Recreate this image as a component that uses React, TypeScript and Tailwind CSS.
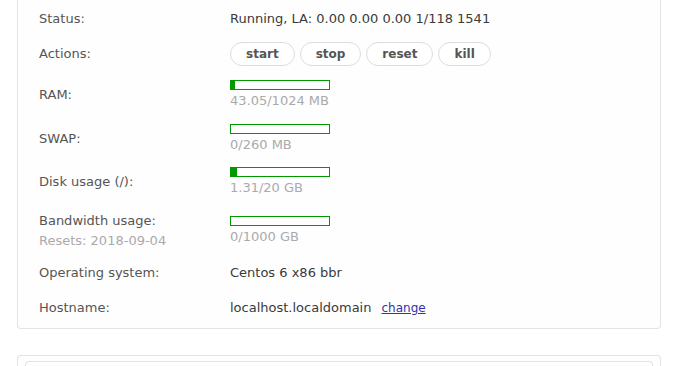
import React from "react";

const font = { fontFamily: '"DejaVu Sans", Verdana, sans-serif' };

function Bar({ used, total, unit }: { used: number; total: number; unit: string }) {
  const pct = Math.min(100, (used / total) * 100);
  return (
    <div className="flex flex-col">
      <div className="h-[10px] w-[100px] border border-[#009900] bg-white">
        <div className="h-full bg-[#009900]" style={{ width: `${pct}%`, minWidth: used > 0 ? 4 : 0 }} />
      </div>
      <div className="mt-[2px] text-[13px] leading-[18px] text-[#aaaaaa]">
        {used}/{total} {unit}
      </div>
    </div>
  );
}

function Row({ label, sub, h, children }: { label: string; sub?: string; h: string; children: React.ReactNode }) {
  return (
    <div className={`flex items-center ${h}`}>
      <div className="w-[191px] shrink-0">
        <div className="text-[13px] leading-[18px] text-[#555555]">{label}</div>
        {sub && <div className="mt-[2px] text-[13px] leading-[18px] text-[#aaaaaa]">{sub}</div>}
      </div>
      <div className="flex items-center text-[13px] leading-[18px] text-[#3a3a3a]">{children}</div>
    </div>
  );
}

const actions = ["start", "stop", "reset", "kill"];

export default function App() {
  return (
    <div className="min-h-[366px] bg-white pb-4" style={font}>
      <div className="ml-[17px] w-[644px] rounded-b-[4px] border-x border-b border-[#e3e3e3] bg-[#fefefe] pl-[21px] pt-[1px]">
        <Row label="Status:" h="h-[36px]">
          Running, LA: 0.00 0.00 0.00 1/118 1541
        </Row>
        <Row label="Actions:" h="h-[34px]">
          <div className="flex gap-[5px]">
            {actions.map((a) => (
              <button
                key={a}
                className="h-[24px] rounded-full border border-[#dddddd] bg-white px-[15px] text-[12px] font-bold leading-[22px] text-[#555555]"
              >
                {a}
              </button>
            ))}
          </div>
        </Row>
        <Row label="RAM:" h="h-[47px]">
          <Bar used={43.05} total={1024} unit="MB" />
        </Row>
        <Row label="SWAP:" h="h-[41px]">
          <Bar used={0} total={260} unit="MB" />
        </Row>
        <Row label="Disk usage (/):" h="h-[45px]">
          <Bar used={1.31} total={20} unit="GB" />
        </Row>
        <Row label="Bandwidth usage:" sub="Resets: 2018-09-04" h="h-[53px]">
          <Bar used={0} total={1000} unit="GB" />
        </Row>
        <Row label="Operating system:" h="h-[31px]">
          Centos 6 x86 bbr
        </Row>
        <Row label="Hostname:" h="h-[40px]">
          <span>localhost.localdomain</span>
          <a href="#" className="ml-[10px] text-[12px] text-[#3333aa] underline">
            change
          </a>
        </Row>
      </div>

      <div className="ml-[17px] mt-[26px] w-[644px] rounded-t-[4px] border-x border-t border-[#e3e3e3] bg-[#fefefe] px-[7px] pt-[5px]">
        <div className="h-[40px] rounded-t-[4px] border-x border-t border-[#e3e3e3]" />
      </div>
    </div>
  );
}
